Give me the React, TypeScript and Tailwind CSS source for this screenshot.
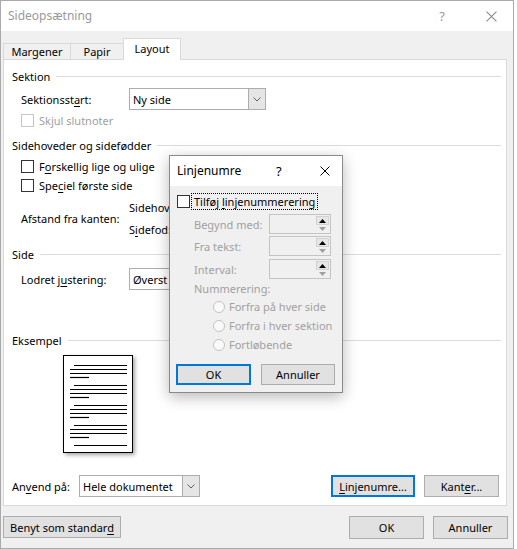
import React from 'react';

const Chevron = () => (
  <svg width="8" height="5" viewBox="0 0 8 5" fill="none">
    <path d="M0.5 0.5 L4 4 L7.5 0.5" stroke="#606060" strokeWidth="1" />
  </svg>
);

const CloseX = ({ size = 10, color = '#000' }: { size?: number; color?: string }) => (
  <svg width={size} height={size} viewBox="0 0 10 10" fill="none">
    <path d="M0.5 0.5 L9.5 9.5 M9.5 0.5 L0.5 9.5" stroke={color} strokeWidth="1" />
  </svg>
);

function Checkbox({ disabled }: { disabled?: boolean }) {
  return (
    <span
      className={`inline-block w-[13px] h-[13px] shrink-0 bg-white border ${
        disabled ? 'border-[#c6c6c6]' : 'border-[#333333]'
      }`}
    />
  );
}

function Radio() {
  return <span className="inline-block w-[12px] h-[12px] shrink-0 rounded-full bg-[#fafafa] border border-[#c3c3c3]" />;
}

function SectionHeader({ label, className = '' }: { label: string; className?: string }) {
  return (
    <div className={`flex items-center h-[16px] ${className}`}>
      <span>{label}</span>
      <div className="flex-1 h-px bg-[#dcdcdc] ml-[6px] mr-[5px]" />
    </div>
  );
}

function Select({ value, width }: { value: string; width: string }) {
  return (
    <div className={`flex h-[22px] border border-[#adadad] bg-white ${width}`}>
      <span className="flex-1 flex items-center pl-[3px] whitespace-nowrap overflow-hidden">{value}</span>
      <div className="w-[17px] flex items-center justify-center bg-[#e5e5e5] border-l border-[#adadad]">
        <Chevron />
      </div>
    </div>
  );
}

function Button({
  children,
  width,
  primary,
  height = 'h-[22px]',
}: {
  children: React.ReactNode;
  width: string;
  primary?: boolean;
  height?: string;
}) {
  return (
    <div
      className={`flex items-center justify-center bg-[#e1e1e1] ${height} ${width} ${
        primary ? 'border-2 border-[#0078d7]' : 'border border-[#adadad]'
      }`}
    >
      {children}
    </div>
  );
}

function SpinBox() {
  return (
    <div className="flex h-[20px] w-[62px] border border-[#c4c4c4] bg-[#f0f0f0] p-px">
      <div className="flex-1" />
      <div className="w-[13px] flex flex-col">
        <div className="h-[9px] flex items-center justify-center bg-[#e6e6e6] border border-[#d2d2d2]">
          <svg width="7" height="4" viewBox="0 0 7 4">
            <path d="M0 4 L3.5 0 L7 4 Z" fill="#000" />
          </svg>
        </div>
        <div className="flex-1 flex items-center justify-center">
          <svg width="7" height="4" viewBox="0 0 7 4">
            <path d="M0 0 L7 0 L3.5 4 Z" fill="#a0a0a0" />
          </svg>
        </div>
      </div>
    </div>
  );
}

function PagePreview() {
  const groups = [0, 20, 40, 60];
  return (
    <div className="w-[70px] h-[98px] bg-white border-[1.5px] border-black shadow-[2px_2px_4px_rgba(0,0,0,0.35)] ml-[51px] mt-[7px]">
      <svg width="67" height="95" viewBox="0 0 67 95">
        {groups.map((g) => (
          <g key={g} stroke="#000" strokeWidth="1.2">
            <line x1="10" x2="63" y1={9.5 + g} y2={9.5 + g} />
            <line x1="6" x2="63" y1={13.5 + g} y2={13.5 + g} />
            <line x1="6" x2="63" y1={17.5 + g} y2={17.5 + g} />
            <line x1="6" x2="25" y1={21.5 + g} y2={21.5 + g} />
          </g>
        ))}
        <line x1="10" x2="63" y1="89.5" y2="89.5" stroke="#000" strokeWidth="1.2" />
      </svg>
    </div>
  );
}

function LineNumbersDialog() {
  return (
    <div className="absolute left-[169px] top-[155px] w-[174px] h-[238px] border border-[#8a8a8a] bg-[#f0f0f0] flex flex-col shadow-[0_4px_14px_rgba(0,0,0,0.28)]">
      <div className="h-[30px] bg-white flex items-center pl-[7px] shrink-0">
        <span className="w-[99px] text-[12px]">Linjenumre</span>
        <span className="w-[44px] text-[13px]">?</span>
        <CloseX size={10} />
      </div>
      <div className="flex flex-col">
        <div className="flex items-center h-[17px] mt-[7px] ml-[7px]">
          <Checkbox />
          <span className="ml-px h-[17px] flex items-center px-[2px] border border-dotted border-black whitespace-nowrap">
            Tilføj&nbsp;<u className="underline-offset-2">l</u>injenummerering
          </span>
        </div>
        {[
          ['Begynd med:', 'mt-[4px]'],
          ['Fra tekst:', 'mt-[2px]'],
          ['Interval:', 'mt-[3px]'],
        ].map(([label, mt]) => (
          <div key={label} className={`flex items-center h-[20px] ${mt}`}>
            <span className="ml-[24px] w-[75px] text-[#a0a0a0]">{label}</span>
            <SpinBox />
          </div>
        ))}
        <div className="h-[16px] mt-px ml-[24px] flex items-center text-[#a0a0a0]">Nummerering:</div>
        {['Forfra på hver side', 'Forfra i hver sektion', 'Fortløbende'].map((label, i) => (
          <div key={label} className={`h-[19px] flex items-center ml-[43px] ${i === 0 ? 'mt-px' : ''}`}>
            <Radio />
            <span className="ml-[4px] text-[#a0a0a0] whitespace-nowrap">{label}</span>
          </div>
        ))}
        <div className="flex mt-[10px] ml-[6px] gap-[10px]">
          <Button width="w-[75px]" height="h-[21px]" primary>
            OK
          </Button>
          <Button width="w-[74px]" height="h-[21px]">
            Annuller
          </Button>
        </div>
      </div>
    </div>
  );
}

export default function App() {
  return (
    <div className="w-[517px] h-[549px] bg-white relative overflow-hidden text-[11px] leading-none text-black font-['Noto_Sans',sans-serif]">
      <div className="w-[514px] h-[549px] border border-[#aaaaaa] flex flex-col bg-[#f0f0f0]">
        {/* Title bar */}
        <div className="h-[30px] bg-white flex items-center shrink-0">
          <span className="ml-[7px] text-[12px] text-[#9a9a9a]">Sideopsætning</span>
          <span className="ml-auto text-[13px] text-[#9a9a9a]">?</span>
          <span className="ml-[41px] mr-[16px]">
            <CloseX size={11} color="#8a8a8a" />
          </span>
        </div>

        {/* Tabs */}
        <div className="flex items-end h-[22px] mt-[7px] pl-[2px]">
          <div className="h-[17px] w-[68px] flex items-center justify-center border border-[#d9d9d9] bg-[#f0f0f0]">
            Margener
          </div>
          <div className="h-[17px] w-[54px] -ml-px flex items-center justify-center border border-[#d9d9d9] bg-[#f0f0f0]">
            Papir
          </div>
          <div className="h-[22px] w-[58px] -ml-px flex items-center justify-center pb-[2px] border border-b-0 border-[#d9d9d9] bg-white relative z-10">
            Layout
          </div>
        </div>

        {/* Panel */}
        <div className="w-[504px] h-[447px] ml-[2px] -mt-px bg-white border border-[#d9d9d9] flex flex-col pl-[8px]">
          <SectionHeader label="Sektion" className="mt-[8px]" />
          <div className="flex items-center h-[22px] mt-[4px] ml-[9px]">
            <span className="w-[108px]">
              Sektionsst<u className="underline-offset-2">a</u>rt:
            </span>
            <Select value="Ny side" width="w-[137px]" />
          </div>
          <div className="flex items-center h-[15px] mt-[3px] ml-[9px]">
            <Checkbox disabled />
            <span className="ml-[5px] text-[#a0a0a0]">Skjul slutnoter</span>
          </div>

          <SectionHeader label="Sidehoveder og sidefødder" className="mt-[9px]" />
          <div className="flex items-center h-[16px] mt-[5px] ml-[9px]">
            <Checkbox />
            <span className="ml-[5px]">
              F<u className="underline-offset-2">o</u>rskellig lige og ulige
            </span>
          </div>
          <div className="flex items-center h-[16px] mt-[3px] ml-[9px]">
            <Checkbox />
            <span className="ml-[5px]">
              Spe<u className="underline-offset-2">c</u>iel første side
            </span>
          </div>
          <div className="flex items-center h-[44px] mt-[3px] ml-[9px]">
            <span className="w-[108px]">Afstand fra kanten:</span>
            <div className="flex flex-col">
              <span className="h-[22px] flex items-center">
                Sidehov<u className="underline-offset-2">e</u>d:
              </span>
              <span className="h-[22px] flex items-center">
                S<u className="underline-offset-2">i</u>defod:
              </span>
            </div>
          </div>

          <SectionHeader label="Side" className="mt-[6px]" />
          <div className="flex items-center h-[22px] mt-[6px] ml-[9px]">
            <span className="w-[108px]">
              Lodret j<u className="underline-offset-2">u</u>stering:
            </span>
            <Select value="Øverst" width="w-[137px]" />
          </div>

          <SectionHeader label="Eksempel" className="mt-[42px]" />
          <PagePreview />

          <div className="flex items-center h-[22px] mt-[22px]">
            <span className="w-[67px]">
              An<u className="underline-offset-2">v</u>end på:
            </span>
            <Select value="Hele dokumentet" width="w-[121px]" />
            <div className="ml-auto mr-[7px] flex gap-[9px]">
              <Button width="w-[84px]" primary>
                <span>
                  <u className="underline-offset-2">L</u>injenumre...
                </span>
              </Button>
              <Button width="w-[75px]">
                <span>
                  Kant<u className="underline-offset-2">e</u>r...
                </span>
              </Button>
            </div>
          </div>
        </div>

        {/* Bottom buttons */}
        <div className="flex mt-[10px] pl-[2px] pr-[5px]">
          <Button width="w-[118px]">
            <span>
              Benyt som standar<u className="underline-offset-2">d</u>
            </span>
          </Button>
          <div className="ml-auto flex gap-[9px]">
            <Button width="w-[75px]" height="h-[23px]">
              OK
            </Button>
            <Button width="w-[75px]" height="h-[23px]">
              Annuller
            </Button>
          </div>
        </div>
      </div>

      <LineNumbersDialog />
    </div>
  );
}
